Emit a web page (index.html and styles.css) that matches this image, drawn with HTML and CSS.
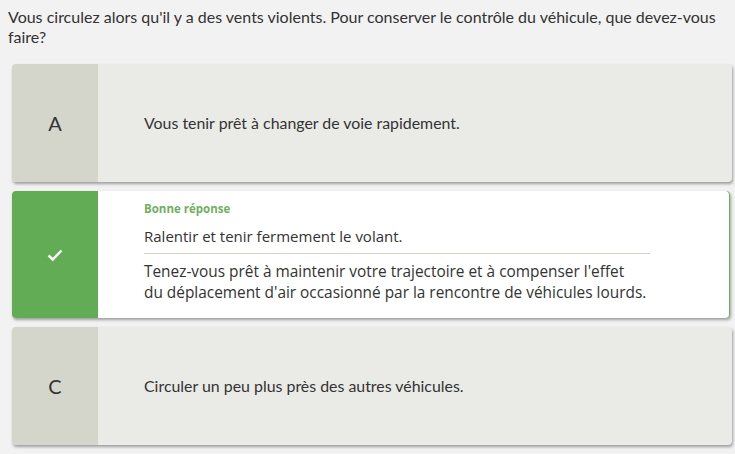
FILE: index.html
```html
<!DOCTYPE html>
<html lang="fr">
<head>
<meta charset="utf-8">
<link rel="stylesheet" href="styles.css">
</head>
<body>
<p class="question">Vous circulez alors qu'il y a des vents violents. Pour conserver le contrôle du véhicule, que devez-vous faire?</p>
<div class="answers">
  <div class="card">
    <div class="label">A</div>
    <div class="content"><p class="answer">Vous tenir prêt à changer de voie rapidement.</p></div>
  </div>
  <div class="card correct">
    <div class="label">
      <svg width="16" height="12" viewBox="0 0 16 12"><path d="M1.5 6.5 L5.8 10.5 L14.5 1.5" fill="none" stroke="#fff" stroke-width="2.4"/></svg>
    </div>
    <div class="content">
      <div class="verdict">Bonne réponse</div>
      <p class="answer">Ralentir et tenir fermement le volant.</p>
      <p class="explain">Tenez-vous prêt à maintenir votre trajectoire et à compenser l'effet du&nbsp;déplacement d'air occasionné par la rencontre de véhicules lourds.</p>
    </div>
  </div>
  <div class="card">
    <div class="label">C</div>
    <div class="content"><p class="answer">Circuler un peu plus près des autres véhicules.</p></div>
  </div>
</div>
</body>
</html>
```
FILE: styles.css
```css
html, body { margin: 0; padding: 0; }
body {
  background: #f2f2f2;
  font-family: Lato, "Liberation Sans", sans-serif;
  color: #333;
  width: 735px;
  height: 454px;
  overflow: hidden;
}
.question {
  margin: 0;
  padding: 7px 8px 0 8px;
  font-size: 16px;
  line-height: 20px;
  color: #333;
}
.answers {
  display: flex;
  flex-direction: column;
  gap: 9px;
  padding: 17px 3px 0 12px;
}
.card {
  display: flex;
  background: #eaebe7;
  border-radius: 4px;
  overflow: hidden;
  box-shadow: 1px 2px 3px rgba(0,0,0,0.35);
  height: 118px;
}
.label {
  width: 86px;
  flex: none;
  background: #d4d6cc;
  display: flex;
  align-items: center;
  justify-content: center;
  font-size: 20px;
  color: #333;
}
.content {
  padding: 0 0 0 46px;
  display: flex;
  flex-direction: column;
  justify-content: center;
  width: 510px;
}
.answer {
  margin: 0;
  font-size: 15.9px;
  line-height: 20px;
}
.card.correct {
  background: #fff;
  height: 127px;
  margin-right: 2px;
  box-shadow: 1px 2px 3px rgba(0,0,0,0.35), inset -1px 0 0 #6fb05f;
}
.card.correct .label { background: #63ac56; }
.card.correct .content { justify-content: flex-start; padding-top: 10px; }
.verdict {
  color: #6fb05f;
  font-family: "Open Sans", sans-serif;
  font-weight: bold;
  font-size: 11.5px;
  line-height: 16px;
  margin-bottom: 9px;
}
.card.correct .answer, .explain {
  font-family: "Open Sans", sans-serif;
}
.card.correct .answer {
  font-size: 15px;
  padding-bottom: 7px;
  border-bottom: 1px solid #d4d6cc;
  width: 506px;
}
.explain {
  margin: 7px 0 0;
  font-size: 15.4px;
  line-height: 21px;
  color: #333;
}
```
